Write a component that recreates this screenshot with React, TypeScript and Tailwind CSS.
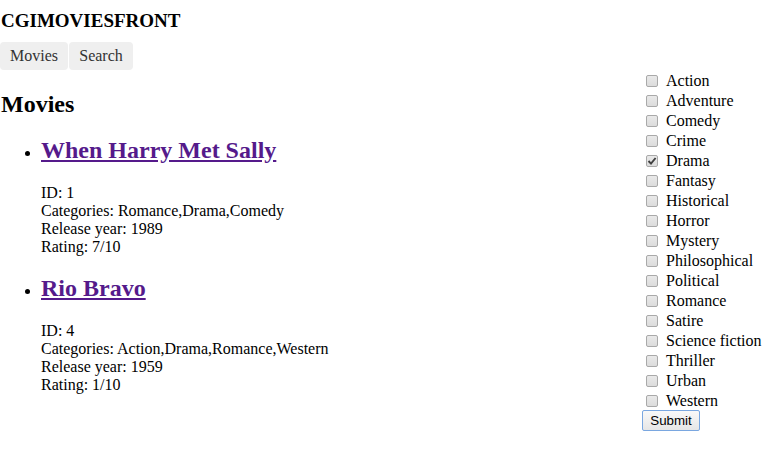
import React from "react";

const movies = [
  { id: 1, title: "When Harry Met Sally", categories: "Romance,Drama,Comedy", year: 1989, rating: "7/10" },
  { id: 4, title: "Rio Bravo", categories: "Action,Drama,Romance,Western", year: 1959, rating: "1/10" },
];

const genres = [
  "Action", "Adventure", "Comedy", "Crime", "Drama", "Fantasy", "Historical", "Horror", "Mystery",
  "Philosophical", "Political", "Romance", "Satire", "Science fiction", "Thriller", "Urban", "Western",
];

export default function App() {
  return (
    <div className="flex min-h-[471px] w-[770px] bg-white font-['Liberation_Serif','Times_New_Roman',serif] text-base text-black">
      <div className="flex-1">
        <div className="pl-px pt-[10px] text-[19px] font-bold leading-[22px]">CGIMOVIESFRONT</div>
        <nav className="mt-[10px] flex gap-px">
          <button className="h-[28px] w-[68px] rounded-[4px] bg-[#efefef] text-center text-base leading-[28px] text-[#333]">
            Movies
          </button>
          <button className="h-[28px] w-[64px] rounded-[4px] bg-[#efefef] text-center text-base leading-[28px] text-[#333]">
            Search
          </button>
        </nav>
        <h2 className="mt-[20px] pl-px text-2xl font-bold leading-[28px]">Movies</h2>
        <ul className="list-disc pl-[41px]">
          {movies.map((m) => (
            <li key={m.id} className="mt-[18px]">
              <h2 className="text-2xl font-bold leading-[28px]">
                <a href="#" className="text-[#551a8b] underline">{m.title}</a>
              </h2>
              <div className="mt-[20px] leading-[18px]">
                <div>ID: {m.id}</div>
                <div>Categories: {m.categories}</div>
                <div>Release year: {m.year}</div>
                <div>Rating: {m.rating}</div>
              </div>
            </li>
          ))}
        </ul>
      </div>
      <form className="w-[128px] shrink-0 pt-[71px]">
        {genres.map((g) => (
          <label key={g} className="flex h-5 items-center leading-[20px]">
            <span className="ml-[4px] flex h-[12px] w-[12px] items-center justify-center rounded-[2px] border border-[#a9a9a9] bg-gradient-to-b from-[#e9e9e9] to-[#dcdcdc]">
              {g === "Drama" && (
                <svg width="10" height="10" viewBox="0 0 10 10">
                  <path d="M1.5 5 L4 7.6 L8.6 2" stroke="#404040" strokeWidth="1.9" fill="none" />
                </svg>
              )}
            </span>
            <span className="ml-[8px] whitespace-nowrap">{g}</span>
          </label>
        ))}
        <button
          type="button"
          className="-mt-px block h-[21px] w-[58px] rounded-[2px] border border-[#7aa7e0] bg-gradient-to-b from-[#f9f9f9] to-[#e6e6e6] text-center font-['Liberation_Sans',Arial,sans-serif] text-[13.33px] leading-[19px] text-black"
        >
          Submit
        </button>
      </form>
    </div>
  );
}
